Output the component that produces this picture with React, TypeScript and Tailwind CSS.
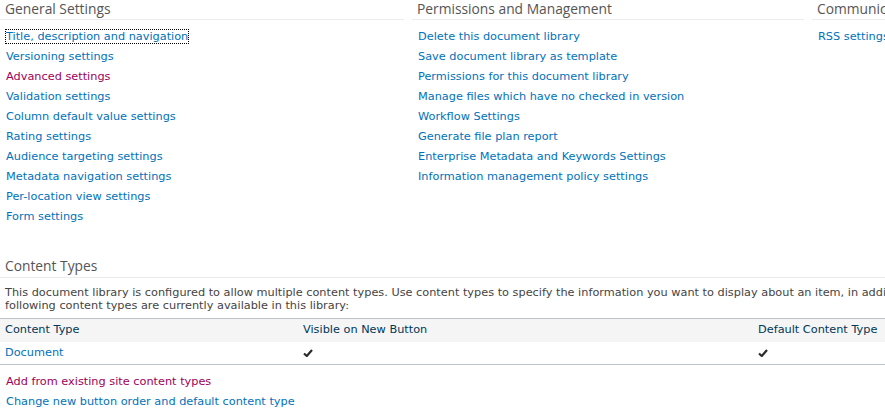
import React from 'react';

const general = [
  'Title, description and navigation',
  'Versioning settings',
  'Advanced settings',
  'Validation settings',
  'Column default value settings',
  'Rating settings',
  'Audience targeting settings',
  'Metadata navigation settings',
  'Per-location view settings',
  'Form settings',
];

const permissions = [
  'Delete this document library',
  'Save document library as template',
  'Permissions for this document library',
  'Manage files which have no checked in version',
  'Workflow Settings',
  'Generate file plan report',
  'Enterprise Metadata and Keywords Settings',
  'Information management policy settings',
];

const communications = ['RSS settings'];

// links the user already opened show in the visited colour
const visited = ['Advanced settings', 'Add from existing site content types'];

const body = { fontFamily: '"DejaVu Sans", Verdana, sans-serif' };
const heading = { fontFamily: '"Open Sans", "Segoe UI", sans-serif' };

function SettingsLink({ label, focused }: { label: string; focused?: boolean }) {
  const color = visited.includes(label) ? 'text-[#a0005b]' : 'text-[#0072bc]';
  return (
    <div className="h-[20px] flex items-center pl-[6px]">
      <a
        href="#"
        className={`${color} text-[11.3px] leading-[13px] whitespace-nowrap ${focused ? 'outline outline-1 outline-dotted outline-black' : ''}`}
      >
        {label}
      </a>
    </div>
  );
}

function Column({ title, links, width }: { title: string; links: string[]; width: string }) {
  return (
    <div className={`${width} shrink-0`}>
      <div className="h-[20px] border-b border-[#ececec] pl-[5px]">
        <h3 style={heading} className="text-[13.8px] leading-[17px] text-[#555555] whitespace-nowrap">
          {title}
        </h3>
      </div>
      <div className="pt-[6px]">
        {links.map((l, i) => (
          <SettingsLink key={l} label={l} focused={i === 0 && title === 'General Settings'} />
        ))}
      </div>
    </div>
  );
}

function Check() {
  return (
    <svg width="10" height="8" viewBox="0 0 10 8">
      <path d="M1 4.5 L3.8 7 L9 1" fill="none" stroke="#2b2b2b" strokeWidth="2.2" />
    </svg>
  );
}

export default function App() {
  return (
    <div className="w-[885px] h-[410px] overflow-hidden bg-white" style={body}>
      <div className="w-[1400px]">
        <div className="flex gap-[8px]">
          <Column title="General Settings" links={general} width="w-[404px]" />
          <Column title="Permissions and Management" links={permissions} width="w-[392px]" />
          <Column title="Communications" links={communications} width="w-[400px]" />
        </div>

        <div className="mt-[32px] h-[20px] border-b border-[#ececec] pl-[5px]">
          <h3 style={heading} className="text-[13.8px] leading-[16px] text-[#555555]">
            Content Types
          </h3>
        </div>

        <p className="mt-[8px] pl-[5px] text-[11.3px] leading-[13px] text-[#444444] whitespace-nowrap">
          This document library is configured to allow multiple content types. Use content types to specify the information you want to display about an item, in addition to its policies, workflows, or other behavior. The
          <br />
          following content types are currently available in this library:
        </p>

        <div className="mt-[6px] border-t border-b border-[#b8c3ce] text-[11.3px]">
          <div className="grid grid-cols-[298px_455px_1fr] h-[23px] items-center bg-[#f5f5f5] text-[#003759]">
            <div className="pl-[5px]">Content Type</div>
            <div className="pl-[5px]">Visible on New Button</div>
            <div className="pl-[5px]">Default Content Type</div>
          </div>
          <div className="grid grid-cols-[298px_455px_1fr] h-[22px] items-center">
            <div className="pl-[5px]">
              <a href="#" className="text-[#0072bc]">Document</a>
            </div>
            <div className="pl-[5px] flex">
              <Check />
            </div>
            <div className="pl-[5px] flex">
              <Check />
            </div>
          </div>
        </div>

        <div className="mt-[6px]">
          <SettingsLink label="Add from existing site content types" />
          <SettingsLink label="Change new button order and default content type" />
        </div>
      </div>
    </div>
  );
}
